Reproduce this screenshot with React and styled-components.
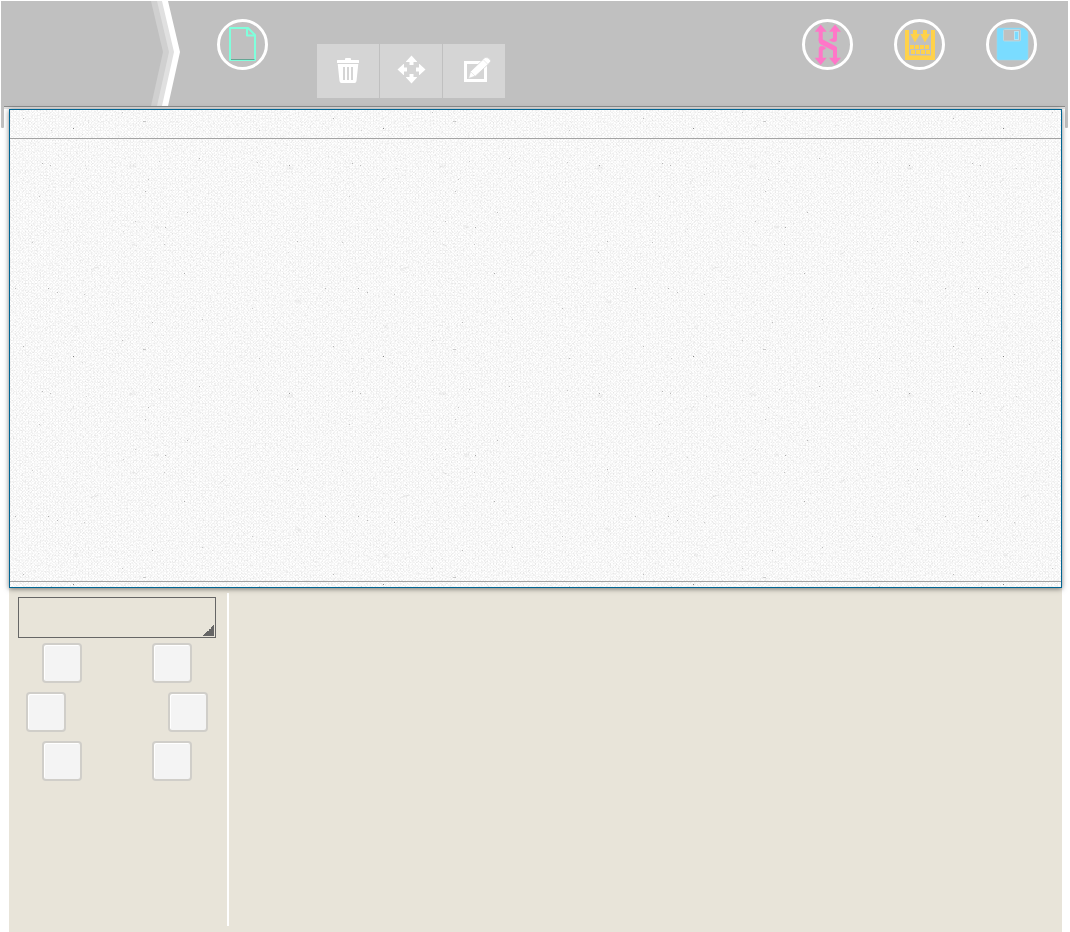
import React from "react";
import styled, { createGlobalStyle } from "styled-components";

const GlobalStyle = createGlobalStyle`
  *, *::before, *::after { box-sizing: border-box; }
  body { margin: 0; background: #fff; font-family: "Liberation Sans", Arial, sans-serif; }
`;

const Page = styled.div`
  display: flex;
  flex-direction: column;
  min-height: 100vh;
  padding: 1px 2px 0 1px;
`;

const Header = styled.header`
  position: relative;
  display: flex;
  align-items: flex-start;
  height: 105px;
  padding-right: 31px;
  background: #c0c0c0;

  &::before,
  &::after {
    content: "";
    position: absolute;
    top: 0;
    width: 3px;
    height: 127px;
    background: #c0c0c0;
    border-radius: 0 0 1px 1px;
  }
  &::before { left: 0; }
  &::after { right: 0; }
`;

const Rule = styled.div`
  height: 3px;
  margin: 0 3px;
  border-top: 1px solid #8c8c8c;
  background: #e2e2e2;
`;

const Brand = styled.div`
  width: 150px;
`;

const Chevron = styled.svg`
  display: block;
  flex: none;
  width: 30px;
  height: 105px;
`;

const RoundButton = styled.button`
  flex: none;
  width: 51px;
  height: 51px;
  margin: 18px 0 0;
  padding: 0;
  border: 0;
  background: none;
  cursor: pointer;

  svg { display: block; }
`;

const NewSlot = styled.div`
  margin: 0 49px 0 36px;
`;

const Toolbar = styled.div`
  display: flex;
  gap: 1px;
  margin-top: 43px;
`;

const ToolButton = styled.button`
  width: 62px;
  height: 54px;
  padding: 0;
  border: 0;
  background: #d5d5d5;
  cursor: pointer;

  svg { display: block; }
`;

const Actions = styled.div`
  display: flex;
  gap: 41px;
  margin-left: auto;
`;

const Board = styled.main`
  position: relative;
  display: flex;
  flex-direction: column;
  justify-content: space-between;
  flex: none;
  height: 479px;
  margin: 0 6px 0 8px;
  padding: 28px 0 5px;
  border: 1px solid #006492;
  background: #fafafa;
  box-shadow: 0 1px 5px rgba(0, 0, 0, 0.5);
  z-index: 1;
`;

const Texture = styled.svg`
  position: absolute;
  inset: 0;
  width: 100%;
  height: 100%;
`;

const BoardBody = styled.div`
  position: relative;
  flex: 1;
  border-top: 1px solid #a3a3a3;
  border-bottom: 1px solid #a3a3a3;
`;

const Panel = styled.section`
  display: flex;
  flex: 1;
  margin: 0 6px 0 8px;
  padding: 5px 0 6px;
  background: #e8e4d9;
`;

const Sidebar = styled.aside`
  width: 220px;
  padding: 4px 11px 0 9px;
  border-right: 2px solid #fff;
`;

const Picker = styled.select`
  appearance: none;
  display: block;
  width: 100%;
  height: 41px;
  padding: 0 14px 0 8px;
  border: 1px solid #666;
  border-radius: 0;
  background: linear-gradient(135deg, transparent 50%, #666 50%) right 1px bottom 1px / 11px 11px no-repeat;
`;

const Keys = styled.div`
  display: flex;
  flex-direction: column;
  align-items: center;
  gap: 9px;
  padding-top: 5px;
`;

const KeyRow = styled.div`
  display: flex;
  justify-content: space-between;
  width: ${(p) => (p.$wide ? "182px" : "150px")};
`;

const Key = styled.button`
  width: 40px;
  height: 40px;
  padding: 0;
  border: 2px solid #d0cec9;
  border-radius: 4px;
  background: #f4f4f4;
  box-shadow: inset 1px 1px 0 #fff;
  cursor: pointer;
`;

const Ring = ({ children }) => (
  <svg width="51" height="51" viewBox="0 0 51 51" aria-hidden="true">
    <circle cx="25.5" cy="25.5" r="24" fill="none" stroke="#fff" strokeWidth="3" />
    {children}
  </svg>
);

const NewIcon = () => (
  <Ring>
    <g fill="none" stroke="#7fffdc" strokeWidth="2" strokeLinejoin="round">
      <path d="M13 9h18l7 7v25H13z" />
      <path d="M30 9v7.500h8" />
    </g>
    <path d="M14 40.500h23.500" stroke="#66a594" />
  </Ring>
);

const ShuffleIcon = () => (
  <Ring>
    <g fill="#ff77c8">
      <path d="M18.700 5.500l6 7.300H12.700zM33 5.500l6 7.300H27zM18.700 46l6-7.300H12.700zM33 46l6-7.300H27z" />
      <path d="M16.700 12h4v9l14.300 7.500V39h-4v-8L18.500 24.500q-1.800-1-1.800-3z" />
      <path d="M16.700 19l4 1.500 12.500 6.500q1.800 1 1.800 3v3l-4-1.500-12-6q-2.300-1.200-2.300-3.500z" />
      <path d="M31 12h4v8q0 3-3 3-2.500 0-5-2l4-2z" />
      <path d="M16.700 39v-8.500q0-3.500 3-3.500 2.500 0 4.500 2.200l-3.500 2.300V39z" />
    </g>
  </Ring>
);

const PackIcon = () => (
  <Ring>
    <g fill="#ffd24a">
      <path d="M11 11h4v25.500h22V11h4v30H11z" />
      <path d="M19 11h4v4h3l-5 8.500L16.300 15H19zM29 11h4v4h3l-5 8.500L26.300 15H29z" />
      {[0, 1, 2, 3].map((i) => (
        <React.Fragment key={i}>
          <rect x={16 + i * 5} y="26" width="4" height="4" />
          <rect x={17 + i * 5} y="31" width="4" height="4" />
        </React.Fragment>
      ))}
    </g>
  </Ring>
);

const SaveIcon = () => (
  <Ring>
    <path d="M12 9h26l4 4v27l-1 1H12l-1-1V10z" fill="#7adcff" stroke="#9ed6ea" strokeWidth=".6" />
    <rect x="17.500" y="10.500" width="17" height="11.500" rx="1" fill="#c0c0c0" stroke="#b8d8e2" />
    <rect x="28.500" y="12.500" width="4" height="8" fill="#7adcff" stroke="#b4e6f6" />
  </Ring>
);

const TrashIcon = () => (
  <svg width="62" height="54" viewBox="0 0 62 54" aria-hidden="true">
    <path
      fill="#fff"
      fillRule="evenodd"
      d="M20 16.500q0-.5.500-.5H28v-1q0-1 1-1h4q1 0 1 1v1h7.500q.5 0 .5.500V19H20zM20.700 20h20.600l-1.800 17q-.2 2-2 2h-13q-1.800 0-2-2zM26 23v13h2V23zM30 23v13h2V23zM34 23v13h2V23z"
    />
  </svg>
);

const MoveIcon = () => (
  <svg width="62" height="54" viewBox="0 0 62 54" aria-hidden="true">
    {[0, 90, 180, 270].map((a) => (
      <path
        key={a}
        fill="#fff"
        transform={`rotate(${a} 31.5 25.5)`}
        d="M31.500 11.500l5.500 6v.5h-3.500v3h-4v-3H26v-.5z"
      />
    ))}
  </svg>
);

const EditIcon = () => (
  <svg width="62" height="54" viewBox="0 0 62 54" aria-hidden="true">
    <path fill="#fff" fillRule="evenodd" d="M21 17h23v21H21zM24 20v15h17V20z" />
    <path fill="#fff" stroke="#d5d5d5" strokeWidth=".8" d="M25.500 34.500l2-7L40 15.500l2-2q3.500-1 6 3.500l-2.500 3-13 12z" />
    <path stroke="#d5d5d5" strokeWidth=".5" d="M40.500 16l4.500 4.500M28 28l4 4" />
  </svg>
);

const specks = [
  [13, 8, 0.25], [63, 18, 0.45], [112, 2, 0.2], [41, 20, 0.15], [72, 24, 0.1],
  [249, 20, 0.2], [32, 53, 0.25], [40, 55, 0.25], [76, 58, 0.15], [189, 48, 0.25],
  [149, 51, 0.2], [247, 52, 0.2], [279, 55, 0.35], [138, 69, 0.2], [135, 81, 0.25],
  [29, 86, 0.2], [177, 102, 0.25], [155, 117, 0.3], [125, 111, 0.2], [22, 132, 0.2],
  [154, 134, 0.2], [287, 131, 0.25], [278, 142, 0.15], [174, 163, 0.3], [38, 178, 0.3],
  [5, 178, 0.25], [47, 182, 0.25], [74, 184, 0.2], [242, 198, 0.2], [142, 212, 0.25],
  [192, 209, 0.2], [113, 121, 0.15], [57, 119, 0.1],
];

const BoardTexture = () => (
  <Texture aria-hidden="true">
    <defs>
      <filter id="grain" x="0" y="0" width="100%" height="100%" colorInterpolationFilters="sRGB">
        <feTurbulence type="fractalNoise" baseFrequency="0.6" numOctaves="3" seed="7" />
        <feColorMatrix values="0 0 0 0 0  0 0 0 0 0  0 0 0 0 0  .2 0 0 0 -.088" />
      </filter>
      <pattern id="weave" width="3" height="3" patternUnits="userSpaceOnUse">
        <rect x="0" y="0" width="1" height="2" fill="#000" opacity=".04" />
        <rect x="1" y="2" width="2" height="1" fill="#000" opacity=".03" />
      </pattern>
      <pattern id="specks" width="310" height="228" patternUnits="userSpaceOnUse">
        {specks.map(([x, y, o]) => (
          <rect key={`${x}-${y}`} x={x} y={y} width="1" height="1" opacity={o} />
        ))}
        <rect x="133" y="11" width="3" height="1" opacity=".18" />
        <g fill="none" stroke="#000" opacity=".07">
          <path d="M60 73l4-5M81 160q2-2 8-3M210 145l5-4M122 134l5 2" />
          <path strokeWidth="3" opacity=".5" d="M144 117h5M119 56h7M277 58h6M286 190l5 3M64 217h4" />
        </g>
      </pattern>
    </defs>
    <rect width="100%" height="100%" fill="#fff" />
    <rect width="100%" height="100%" filter="url(#grain)" />
    <rect width="100%" height="100%" fill="url(#weave)" />
    <rect width="100%" height="100%" fill="url(#specks)" />
  </Texture>
);

const keyRows = [
  { wide: false, keys: ["Top left", "Top right"] },
  { wide: true, keys: ["Middle left", "Middle right"] },
  { wide: false, keys: ["Bottom left", "Bottom right"] },
];

export default function App() {
  return (
    <Page>
      <GlobalStyle />
      <Header>
        <Brand />
        <Chevron viewBox="0 0 30 105" aria-hidden="true">
          <path d="M0 0h7l12 51L7 105H0l12-54z" fill="#d0d0d0" />
          <path d="M6 0h6l12 51-12 54H6l12-54z" fill="#e0e0e0" />
          <path d="M11 0h6l12 51-12 54h-6l12-54z" fill="#fff" />
        </Chevron>
        <NewSlot>
          <RoundButton type="button" aria-label="New"><NewIcon /></RoundButton>
        </NewSlot>
        <Toolbar role="toolbar" aria-label="Edit tools">
          <ToolButton type="button" aria-label="Delete"><TrashIcon /></ToolButton>
          <ToolButton type="button" aria-label="Move"><MoveIcon /></ToolButton>
          <ToolButton type="button" aria-label="Edit"><EditIcon /></ToolButton>
        </Toolbar>
        <Actions>
          <RoundButton type="button" aria-label="Shuffle"><ShuffleIcon /></RoundButton>
          <RoundButton type="button" aria-label="Pack"><PackIcon /></RoundButton>
          <RoundButton type="button" aria-label="Save"><SaveIcon /></RoundButton>
        </Actions>
      </Header>
      <Rule />
      <Board>
        <BoardTexture />
        <BoardBody />
      </Board>
      <Panel>
        <Sidebar>
          <Picker aria-label="Category" />
          <Keys>
            {keyRows.map((row) => (
              <KeyRow key={row.keys[0]} $wide={row.wide}>
                {row.keys.map((name) => (
                  <Key key={name} type="button" aria-label={name} />
                ))}
              </KeyRow>
            ))}
          </Keys>
        </Sidebar>
      </Panel>
    </Page>
  );
}
